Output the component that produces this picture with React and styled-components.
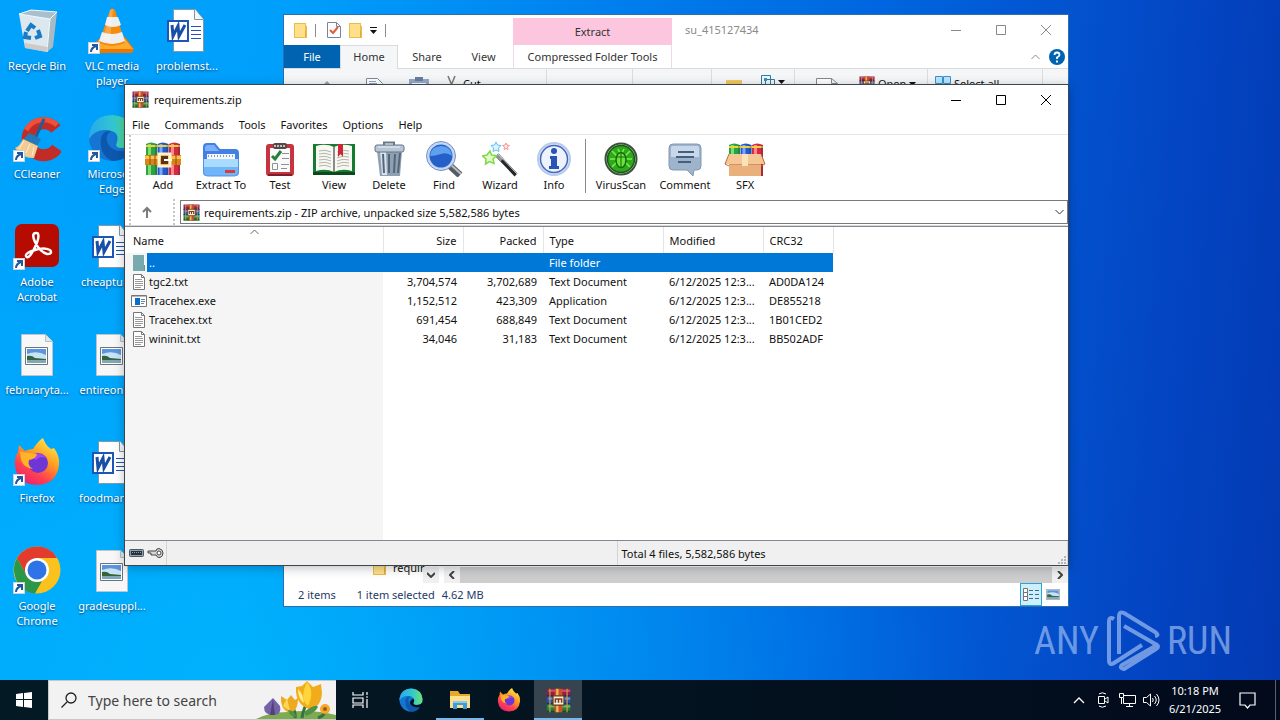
import React from "react";
import styled, { createGlobalStyle, css } from "styled-components";

const Global = createGlobalStyle`
  * { box-sizing: border-box; }
  body { margin: 0; font-family: "Noto Sans", "Open Sans", sans-serif; font-size: 11px; color: #111; }
  button, input, select { font: inherit; color: inherit; border: 0; background: none; padding: 0; margin: 0; }
  svg { display: block; flex: none; }
`;

const Screen = styled.div`
  min-height: 100vh;
  display: flex;
  flex-direction: column;
  overflow: hidden;
`;
const Desktop = styled.main`
  position: relative;
  flex: 1;
  background:
    radial-gradient(ellipse at 20% 100%, rgba(0, 196, 255, 0.5), rgba(0, 196, 255, 0) 50%),
    linear-gradient(95deg, #00a2fc 0%, #009ffb 22%, #0080ee 45%, #0065e0 66%, #0350cc 82%, #0344c2 90%, #033ab2 100%);
`;

/* Desktop shortcuts */
const IconGrid = styled.div`
  display: grid;
  grid-template-columns: repeat(3, 75px);
  grid-auto-rows: 108px;
`;
const Shortcut = styled.button`
  display: flex;
  flex-direction: column;
  align-items: center;
  padding: 6px 1px 0 0;
  color: #fff;
  line-height: 15px;
  text-shadow: 0 1px 2px rgba(0, 30, 80, 0.8);
  grid-column: ${(p) => p.$col};
  grid-row: ${(p) => p.$row};
`;
const ShortcutArt = styled.span`
  position: relative;
  display: block;
  width: 48px;
  height: 48px;
  margin-bottom: 4px;
`;
const ArrowBadge = styled.span`
  position: absolute;
  left: 0;
  bottom: 0;
  width: 12px;
  height: 12px;
  background: #fff;
  border: 1px solid #c9d3dc;
`;

/* Windows */
const Frame = styled.section`
  position: absolute;
  display: flex;
  flex-direction: column;
  overflow: hidden;
  background: #fff;
`;
const ExplorerFrame = styled(Frame)`
  inset: 14px 211px 73px 283px;
  border: 1px solid #2d6fa8;
`;
const ArchiveFrame = styled(Frame)`
  inset: 84px 211px 114px 124px;
  border: 1px solid #3c4650;
  box-shadow: 0 2px 10px rgba(0, 0, 0, 0.25);
`;
const Controls = styled.div`
  display: flex;
  margin-left: auto;
  color: ${(p) => (p.$dim ? "#888" : "#000")};
`;
const Control = styled.button`
  width: 45px;
  height: 29px;
  display: grid;
  place-items: center;
`;

/* Explorer */
const TitleRow = styled.header`
  display: flex;
  height: 30px;
`;
const QuickBar = styled.div`
  width: 229px;
  display: flex;
  align-items: center;
  padding-left: 10px;
`;
const QuickGap = styled.span`
  width: ${(p) => p.$w}px;
`;
const VLine = styled.span`
  width: 1px;
  height: 13px;
  background: #8c8c8c;
`;
const ExtractTab = styled.div`
  width: 159px;
  margin-top: 3px;
  background: #fcc6df;
  display: grid;
  place-items: center;
  color: #333;
`;
const WindowTitle = styled.span`
  padding-left: 13px;
  line-height: 30px;
  color: #8a8a8a;
`;
const TabRow = styled.nav`
  display: flex;
  height: 24px;
  border-bottom: 1px solid #dadbdc;
  color: #333;
`;
const Tab = styled.button`
  width: ${(p) => p.$w}px;
  ${(p) => p.$kind === "file" && css`background: #0063b1; color: #fff;`}
  ${(p) => p.$kind === "active" && css`background: #f5f6f7; border: 1px solid #dadbdc; border-bottom: 0; height: 24px; padding-bottom: 2px;`}
  ${(p) => p.$kind === "context" && css`border: solid #ecdbe4; border-width: 0 1px; margin-left: 2px;`}
`;
const HelpArea = styled.div`
  margin-left: auto;
  display: flex;
  align-items: center;
  gap: 9px;
  padding-right: 3px;
`;
const Ribbon = styled.div`
  display: flex;
  height: 92px;
  background: #f5f6f7;
  border-bottom: 1px solid #dadbdc;
`;
const RibbonGroup = styled.div`
  width: ${(p) => p.$w}px;
  padding: 6px 0 0 ${(p) => p.$pad}px;
  display: flex;
  align-items: flex-start;
  gap: ${(p) => p.$gap || 0}px;
  border-right: 1px solid #dcdddd;
  line-height: 18px;
  white-space: nowrap;
`;
const RibbonLabel = styled.button`
  display: flex;
  align-items: center;
  gap: 3px;
  line-height: 18px;
`;
const ExplorerBody = styled.div`
  flex: 1;
`;
const ExplorerFoot = styled.div`
  display: flex;
  height: 24px;
  align-items: flex-end;
`;
const TreeItem = styled.div`
  width: 139px;
  padding-left: 89px;
  display: flex;
  align-self: stretch;
  gap: 6px;
  line-height: 18px;
`;
const ScrollButton = styled.button`
  width: 16px;
  height: 16px;
  background: #f0f0f0;
  display: grid;
  place-items: center;
  margin-left: ${(p) => p.$gap || 0}px;
`;
const ScrollThumb = styled.span`
  flex: 1;
  height: 16px;
  background: #cdcdcd;
`;
const ExplorerStatus = styled.footer`
  display: flex;
  align-items: center;
  height: 23px;
  padding-left: 14px;
  color: #1e3a66;
  gap: 21px;
`;
const Selection = styled.span`
  display: flex;
  gap: 7px;
`;
const ViewButtons = styled.div`
  margin-left: auto;
  display: flex;
  padding-right: 4px;
`;
const ViewButton = styled.button`
  width: 22px;
  height: 23px;
  display: grid;
  place-items: center;
  ${(p) => p.$on && css`background: #cdeefb; border: 1px solid #2aa3d8;`}
`;

/* Archive manager */
const ArchiveTitle = styled.header`
  display: flex;
  align-items: center;
  height: 29px;
  padding-left: 7px;
  gap: 5px;
`;
const Menu = styled.nav`
  display: flex;
  gap: 1px;
  height: 21px;
  border-bottom: 1px solid #e6e6e6;
`;
const MenuItem = styled.button`
  padding: 0 7px;
`;
const Tools = styled.div`
  display: flex;
  height: 64px;
  padding-left: 4px;
`;
const Grip = styled.span`
  width: 2px;
  margin-right: ${(p) => p.$after}px;
  background: repeating-linear-gradient(#c4c4c4 0 2px, transparent 2px 4px);
`;
const Tool = styled.button`
  width: ${(p) => p.$w}px;
  display: flex;
  flex-direction: column;
  align-items: center;
  padding-top: 6px;
  line-height: 16px;
  white-space: nowrap;
`;
const ToolRule = styled.span`
  width: 1px;
  margin: 4px 2px 6px 6px;
  background: #8a8a8a;
`;
const AddressRow = styled.div`
  display: flex;
  height: 27px;
  padding-left: 4px;
  border-bottom: 1px solid #d8d8d8;
`;
const UpButton = styled.button`
  width: 30px;
  display: grid;
  place-items: center;
  margin-right: 11px;
`;
const AddressBox = styled.label`
  flex: 1;
  display: flex;
  align-items: center;
  height: 24px;
  margin-top: 1px;
  border: 1px solid #7a7a7a;
  padding: 0 3px 0 2px;
  gap: 4px;
`;
const AddressSelect = styled.select`
  flex: 1;
  appearance: none;
  outline: 0;
`;
const ListArea = styled.div`
  flex: 1;
  border-top: 1px solid #828790;
  border-bottom: 1px solid #828790;
  background: linear-gradient(90deg, #f5f5f5 258px, #fff 258px);
`;
const FileTable = styled.table`
  width: 708px;
  table-layout: fixed;
  border-collapse: collapse;
`;
const HeadCell = styled.th`
  position: relative;
  height: 26px;
  width: ${(p) => p.$w}px;
  padding: 0 6px 0 ${(p) => p.$pad || 6}px;
  font-weight: 400;
  text-align: ${(p) => p.$align || "left"};
  background: #fff;
  border-right: 1px solid #e5e5e5;
`;
const SortMark = styled.span`
  position: absolute;
  top: 2px;
  left: 125px;
`;
const Row = styled.tr`
  height: 19px;
  ${(p) => p.$on && css`color: #fff;`}
`;
const Cell = styled.td`
  padding: 0 6px;
  line-height: 19px;
  white-space: nowrap;
  overflow: hidden;
  text-align: ${(p) => p.$align || "left"};
  ${(p) => p.$on && css`background: #0078d7;`}
`;
const NameCell = styled(Cell)`
  padding: 0;
  background: none;
`;
const NameFlex = styled.div`
  display: flex;
  align-items: center;
`;
const FileArt = styled.span`
  width: 22px;
  padding-left: 6px;
`;
const FileLabel = styled.span`
  flex: 1;
  padding-left: 2px;
  height: 19px;
  ${(p) => p.$on && css`background: #0078d7;`}
`;
const ArchiveStatus = styled.footer`
  display: flex;
  height: 24px;
  background: #f0f0f0;
`;
const StatusPart = styled.div`
  display: flex;
  align-items: center;
  gap: 3px;
  padding-left: 4px;
  border-right: 1px solid #d4d4d4;
  flex: ${(p) => p.$flex};
`;
const SizeGrip = styled.span`
  margin-left: auto;
  align-self: flex-end;
`;

/* Watermark */
const Watermark = styled.div`
  position: absolute;
  right: 48px;
  bottom: 8px;
  display: flex;
  align-items: center;
  gap: 7px;
  color: rgba(170, 198, 245, 0.65);
  font: 38px/62px "Liberation Sans Narrow", "Roboto Condensed", "DejaVu Sans Condensed", sans-serif;
`;

/* Taskbar */
const Taskbar = styled.footer`
  display: flex;
  height: 40px;
  background: linear-gradient(90deg, #031a24, #03131f 50%, #020a1c);
  color: #fff;
`;
const TaskButton = styled.button`
  width: 48px;
  margin-right: ${(p) => p.$gap ?? 1}px;
  display: grid;
  place-items: center;
  border-bottom: 2px solid ${(p) => (p.$open ? "#76b9ed" : "transparent")};
  border-top: 2px solid transparent;
  background: ${(p) => (p.$on ? "#35444f" : "none")};
`;
const SearchBox = styled.label`
  display: flex;
  align-items: center;
  width: 288px;
  padding-left: 12px;
  gap: 11px;
  background: #f2f2f2;
  border: 1px solid #c8c8c8;
  border-right: 0;
  color: #333;
`;
const SearchInput = styled.input`
  flex: 1;
  min-width: 0;
  font-size: 14px;
  outline: 0;
  &::placeholder { color: #444; opacity: 1; }
`;
const Tray = styled.div`
  margin-left: auto;
  display: flex;
  align-items: center;
`;
const TrayButton = styled.button`
  width: 24px;
  height: 40px;
  display: grid;
  place-items: center;
`;
const Clock = styled.time`
  width: 64px;
  text-align: center;
  line-height: 18px;
`;
const ActionButton = styled(TrayButton)`
  width: 40px;
  margin-right: 8px;
`;
const ShowDesktop = styled.button`
  width: 5px;
  height: 40px;
  border-left: 1px solid #59636e;
`;

const Svg = ({ w = 16, h = w, box, children, ...rest }) => (
  <svg width={w} height={h} viewBox={box || `0 0 ${w} ${h}`} fill="none" aria-hidden="true" {...rest}>{children}</svg>
);

/* Icons */
const Books = ({ size = 17 }) => (
  <Svg w={size} box="0 0 32 32">
    <path fill="#8e1f45" d="M1 1h30v10H1z" /><path fill="#cf4a6c" d="M3 2h28v3H3z" /><path fill="#5a1733" d="M1 9h30v2H1z" />
    <path fill="#274fa8" d="M1 11h30v10H1z" /><path fill="#5f8ee0" d="M3 12h28v3H3z" /><path fill="#182f6d" d="M1 19h30v2H1z" />
    <path fill="#2a7a3c" d="M1 21h30v10H1z" /><path fill="#6bb560" d="M3 22h28v3H3z" /><path fill="#174a24" d="M1 29h30v2H1z" />
    <path fill="#c9a04a" d="M4 1h2v30H4zM26 1h2v30h-2z" opacity=".75" />
    <path fill="#c8502a" d="M11 1h10v30H11z" /><path fill="#f0b659" d="M13 1h3v30h-3z" />
    <path fill="#f7efe0" stroke="#6d3510" strokeWidth="1.5" d="M9 10h14v12H9z" />
    <path stroke="#7a3f13" strokeWidth="2" d="M12 19v-5h8v5M16 14v5" />
  </Svg>
);
const Upright = ({ y = 0 }) => (
  <g>
    {[["#2ba344", "#7ae06c", 1], ["#2558cc", "#78a8ff", 12.5], ["#d42a42", "#ff8591", 24]].map(([c, l, x]) => (
      <g key={x} transform={`translate(${x} ${y})`}>
        <path fill={c} d="M0 3q5-3 11 0v31H0z" /><path fill={l} d="M2 3h3v31H2z" />
        <path stroke="#f0d13a" strokeWidth="2" d="M0 5h11" /><path fill="#222" opacity=".25" d="M9 3h2v31H9z" />
      </g>
    ))}
  </g>
);
const toolArt = {
  Add: (
    <Svg w={36}><Upright />
      <path fill="#d9851b" d="M0 14h36v10H0z" /><path fill="#ffc24e" d="M0 15h36v3H0z" />
      <path stroke="#8f4e08" d="M5 14v10M10 14v10M31 14v10" />
      <path stroke="#fff2c8" strokeWidth="3" d="M14 13h11v12H14z" /><path fill="#603310" d="M16 15h7v8h-7z" /><path fill="#fff" d="M19 18h8v2h-8z" />
    </Svg>
  ),
  "Extract To": (
    <Svg w={38} h={36}>
      <path fill="#4380e6" d="M1 6q0-4 4-4h8l5 6h15q4 0 4 4v18H1z" /><path fill="#7db0fa" d="M3 7q0-3 3-3h6l5 6H3z" />
      <path fill="#f3f6fa" d="M5 13h28v10H5z" /><path stroke="#8f9ba8" strokeWidth="2" strokeDasharray="1 2" d="M6 15h27" />
      <path fill="#a9dbff" d="M1 18h36v13q0 4-4 4H5q-4 0-4-4z" /><path fill="#6fb5fa" d="M1 26h36v5q0 4-4 4H5q-4 0-4-4z" />
      <path fill="#dc3b32" d="M23 29h10v3H23z" /><path stroke="#5493e6" d="M1.500 18v13q0 4 4 4h27q4 0 4-4V18" />
    </Svg>
  ),
  Test: (
    <Svg w={32} h={36}>
      <rect x="2" y="3" width="28" height="32" rx="3" fill="#c7343f" /><path fill="#7d1d28" d="M4 33h24v2H4z" />
      <path fill="#fafafa" d="M6 7h20v24H6z" /><rect x="9" y="2" width="14" height="6" rx="2" fill="#554848" />
      <path stroke="#e6e6e6" strokeWidth="1.5" strokeDasharray="2 1" d="M10 5h12" />
      <path stroke="#27813b" strokeWidth="3" d="m8 15 3 3 6-8" /><path stroke="#8b929a" d="M18 12.500h7M18 17.500h7M17 23.500h8M17 27.500h6M8.500 22.500h5v6h-5z" />
    </Svg>
  ),
  View: (
    <Svg w={42} h={36}>
      <path fill="#167a31" d="M0 3h42v31H0z" /><path fill="#0a4a1c" d="M0 31h42v3H0z" />
      <path fill="#f8f8f3" d="M3 5q10-3 18 1 8-4 18-1v25q-10-3-18 1-8-4-18-1z" />
      <path stroke="#666" strokeWidth="1.5" d="M21 5v26" />
      {[10, 13, 16, 19, 22, 25].map((y) => <path key={y} stroke="#b4b4ac" d={`M6 ${y}q6-2 12 1M24 ${y + 1}q6-3 12-1`} />)}
      <path fill="#ce2835" d="M25 3h5v13l-2.500-3-2.500 3z" />
    </Svg>
  ),
  Delete: (
    <Svg w={34} h={36}>
      <path stroke="#6b7885" strokeWidth="2" d="M12 4V1.500h10V4" />
      <path fill="#8da0b4" d="M5 10h25l-2 25H8z" /><path fill="#d8e2ec" d="M8 10h6l1 24H10z" />
      <path stroke="#566677" strokeWidth="2" d="m11 13 1 19M17 13v19M23 13l-1 19M28 12l-2 20" />
      <rect x="3" y="4" width="29" height="7" rx="2" fill="#b7c5d4" stroke="#647486" /><path stroke="#e9f1f8" d="M6 6h22" />
    </Svg>
  ),
  Find: (
    <Svg w={38} h={36}>
      <path stroke="#555b63" strokeWidth="7" d="m24 24 11 10" /><path stroke="#b8bfc7" strokeWidth="2" d="m25 23 11 10" />
      <circle cx="16" cy="15" r="13" fill="#2560c9" stroke="#c4d6f6" strokeWidth="3" /><circle cx="16" cy="15" r="14.500" stroke="#7692c3" />
      <path fill="#5ea1ee" d="M5 15q1-10 11-10t11 10q-5-4-11-2t-11 2z" />
    </Svg>
  ),
  Wizard: (
    <Svg w={36}>
      <path stroke="#24282b" strokeWidth="4" d="m15 14 19 20" /><path stroke="#909499" strokeWidth="4" d="m15 14 5 5" /><path stroke="#ccc" d="m16 13 19 20" />
      <path fill="#e2fac8" stroke="#7fd94a" strokeWidth="1.500" d="m8 10 1.500 4 5 .5-3.500 3.500 1 4.500-4.500-2-4 2.500.500-5-3.500-3 4.500-1z" />
      <path fill="#dcf4ff" stroke="#5fc1f0" d="m14 1 1.500 3 3.500.500-2.500 2.500.500 3.500-3-1.500-3 1.500.500-3.500L9 4.500l3.500-.500z" />
      <path fill="#ffe2e2" stroke="#f09a9a" d="m24 2 1 2 2.500.500-2 1.500.500 2.500-2-1-2 1 .500-2.500-2-1.500 2.500-.500z" />
    </Svg>
  ),
  Info: (
    <Svg w={36}>
      <circle cx="18" cy="18" r="16" fill="#dbe5f8" stroke="#b9cbea" strokeWidth="2" /><circle cx="18" cy="18" r="13.5" fill="#edf2fd" stroke="#4068bd" strokeWidth="1.500" />
      <circle cx="18" cy="10" r="3" fill="#2754b5" /><path fill="#2754b5" d="M14 15h7v10h2v3H13v-3h2v-7h-1z" />
    </Svg>
  ),
  VirusScan: (
    <Svg w={36}>
      <circle cx="18" cy="18" r="15.500" fill="#eef4ee" stroke="#3c503c" strokeWidth="2" /><circle cx="18" cy="18" r="13.500" fill="#2fa81c" stroke="#145c14" strokeWidth="1.500" />
      <path stroke="#7cf04a" strokeWidth="1.500" d="m9 10 5 5M27 10l-5 5M7 18h6M23 18h6M9 26l5-5M27 26l-5-5M15 8l2 4M21 8l-2 4" />
      <ellipse cx="18" cy="19" rx="5" ry="7.500" fill="#6fe038" stroke="#0e6b10" strokeWidth="1.500" /><path stroke="#0e6b10" d="M18 12v14M13 16h10" />
    </Svg>
  ),
  Comment: (
    <Svg w={36}>
      <path fill="#9eb4cc" stroke="#8298b2" d="M6 3h24q4 0 4 4v18q0 4-4 4h-3l-1 6-6-6H6q-4 0-4-4V7q0-4 4-4z" />
      <path fill="#c9d8e8" d="M6 5h24q2 0 2 2v9H4V7q0-2 2-2z" /><path stroke="#455f7e" strokeWidth="2" d="M11 11h16M9 16h18M11 21h13" />
    </Svg>
  ),
  SFX: (
    <Svg w={42} h={36}>
      <g transform="translate(4)"><Upright y={1} /></g>
      <path fill="#d98f5c" d="M5 13h32v22H5z" /><path fill="#f5c795" d="M5 13h32l4 10H1z" />
      <path fill="#eab07c" d="M5 24h32v11H5z" /><path stroke="#b56d40" d="m5 13-4 10 4 2M37 13l4 10-4 2" /><path fill="#fbe2b8" d="M18 13h6v12h-6z" />
    </Svg>
  ),
};
const Folder = () => (
  <Svg w={14} h={17}><path fill="#e8bd4d" d="M0 1h12v3h1v12H0z" /><path fill="#ffe08a" d="M1 2h10v13H1z" /><path stroke="#dcab3b" d="M11.500 9v6" /></Svg>
);
const TextFile = () => (
  <Svg w={16}><path fill="#fff" stroke="#777" d="M2.500.5h8l3 3v12h-11z" /><path stroke="#777" d="M10.500.5v3h3" /><path stroke="#999" d="M4 5.500h7M4 7.500h8M4 9.500h8M4 11.500h8M4 13.500h6" /></Svg>
);
const ExeFile = () => (
  <Svg w={16}><path fill="#fff" stroke="#777" d="M.5 2.500h15v11H.5z" /><path stroke="#b8b8b8" d="M1 3.500h14" /><path fill="#0a6cc8" d="M4 5h5v7H4z" /><path stroke="#6787a3" d="M10 6.500h4M10 8.500h4M10 10.500h3" /></Svg>
);
const UpFolder = () => (
  <Svg w={16}><path fill="#78a9ad" d="M2 0h11v10h1v6H2z" /><path stroke="#619298" d="M13.500 10v6" /></Svg>
);
const Scenery = ({ x = 0, y = 0 }) => (
  <g transform={`translate(${x} ${y})`}>
    <path fill="#fff" stroke="#68747e" d="M.5.5h22v17H.5z" /><path fill="#5b95dd" d="M2 2h19v14H2z" /><path fill="#c7e3f5" d="M2 7q10-4 19 1v4H2z" />
    <path fill="#35633a" d="M2 9q5-1 8 2l11 1v1H2z" /><path fill="#7fa9b8" d="M2 13h19v3H2z" />
  </g>
);
const Firefox = ({ size }) => (
  <Svg w={size} box="0 0 48 48">
    <defs><linearGradient id="foxBody" x1=".8" y1="0" x2=".2" y2="1"><stop stopColor="#fff04b" /><stop offset=".4" stopColor="#ff9a22" /><stop offset=".7" stopColor="#ff4150" /><stop offset="1" stopColor="#e81c75" /></linearGradient></defs>
    <path fill="url(#foxBody)" d="M30 0q3 8 8 11l3-1q6 8 5 17-2 19-22 20Q4 46 2 28 1 20 5 14l1-7 6 6q4-2 8-2 5-8 10-11z" />
    <circle cx="25" cy="25" r="10" fill="#6e36d4" /><path fill="#a547ef" d="M17 18q8-6 17 2-7-3-11 2z" />
    <path fill="#ffb327" d="M7 13q5 2 10 2l7 1q-1 5-8 6-2 6 4 9-9-1-12-9z" />
  </Svg>
);
const Edge = ({ size }) => (
  <Svg w={size} box="0 0 48 48">
    <defs><linearGradient id="edgeTop"><stop stopColor="#27a8ea" /><stop offset=".55" stopColor="#32c8cf" /><stop offset="1" stopColor="#6de46f" /></linearGradient></defs>
    <circle cx="24" cy="24" r="23" fill="#1476d2" />
    <path fill="url(#edgeTop)" d="M1 21Q4 1 25 1q21 2 22 22 0 11-13 11-8 0-5-6 3-11-10-12Q7 15 1 25z" />
    <path fill="#0d58ae" d="M13 24q2-8 10-7-7 5-3 13 5 8 15 7 7-1 8-2-4 12-19 12-13-6-11-23z" />
    {size < 30 && <path fill="#03131f" d="M29 21q3 5 0 8-1 5 6 5 8 0 11-4l1 6-6 3q-16 0-19-8-1-6 7-10z" />}
  </Svg>
);
const desktopArt = {
  bin: (
    <Svg w={48}>
      <path fill="#a9bfcc" d="m6 8 12-4 26 2-7 7z" /><path fill="#dce8ee" d="m6 8 31 5-3 33-22-4z" /><path fill="#a8bac4" d="m37 13 7-7-4 35-6 5z" />
      <path stroke="#f3fbff" d="m6 8 31 5 7-7-26-2zM37 13l-3 33" /><path fill="#c5b5ae" opacity=".6" d="m12 37 23 4-1 5-22-4z" />
      <path stroke="#187cc4" strokeWidth="4" d="m14 25 4-6 4 3m3 2 2 6-5 2m-4 0-6-1 1-5" />
    </Svg>
  ),
  vlc: (
    <Svg w={48}>
      <path fill="#ef7600" d="m8 36 5-5h24l9 12-2 4H7L5 43z" /><path fill="#ffab2e" d="m11 34 26-1 8 10H6z" />
      <path fill="#f68a0b" d="M22 4q2-3 5 0l10 33q-13 6-26 0z" /><path fill="#eee" d="m19 11 11 0 3 8q-8 4-16 0zM14 26q10 4 20 0l3 9q-13 6-26 0z" />
      <path fill="#fff" opacity=".25" d="m22 4 3-1-3 33-7-2z" />
    </Svg>
  ),
  word: (
    <Svg w={48}>
      <path fill="#fff" stroke="#8099ad" d="M10.500 3.500h22l8 10v32h-30z" /><path fill="#f3f6f9" stroke="#8294a5" d="M31.500 3.500v10h9" />
      <path stroke="#2456af" d="M28 20.500h10M28 24.500h10M28 28.500h10M28 32.500h10" strokeWidth="1.200" />
      <path fill="#fff" stroke="#1e56b5" strokeWidth="2" d="M5 15h20v20H5z" /><path stroke="#174ea6" strokeWidth="3" d="m9 19 1 11 5-10 1 10 6-11" />
    </Svg>
  ),
  image: (
    <Svg w={48}><path fill="#f7f7f7" stroke="#bcc6cc" d="M8.500 4.500h24l7 7v34h-31z" /><path fill="#e4e4e4" stroke="#b5bfc6" d="M32.500 4.500v7h7" /><Scenery x={12} y={17} /></Svg>
  ),
  ccleaner: (
    <Svg w={48}>
      <path stroke="#c22c26" strokeWidth="12" d="M43 15A16 16 0 1 0 44 34" /><path stroke="#ef503b" strokeWidth="5" d="M44 11A20 20 0 0 0 13 16" />
      <path stroke="#1d5d98" strokeWidth="3" d="m31 5-9 20" /><path fill="#2479b9" d="m16 19 12 6-4 7-14-6z" />
      <path fill="#f2ca93" d="m10 25 15 7-4 12q-10 1-19-10 5-2 8-9z" /><path stroke="#fff0cc" d="m11 27-5 8M17 30l-4 9M21 33l-2 9" />
    </Svg>
  ),
  edge: <Edge size={48} />,
  acrobat: (
    <Svg w={48}><rect x="2" y="2" width="44" height="43" rx="7" fill="#b50b00" /><path stroke="#fff" strokeWidth="2.500" strokeLinejoin="round" d="M23 11q-5 0-1 9 5 10 12 12 6 0 3-4-6-3-15 0-10 3-9 6 2 4 7-5 7-13 5-17 0-1-2-1z" /></Svg>
  ),
  firefox: <Firefox size={48} />,
  chrome: (
    <Svg w={48}>
      <circle cx="24" cy="24" r="23.500" fill="#fbc11c" /><path fill="#e33b2e" d="M4 12Q11 .5 24 .5q14 0 20 11.500H24L14 30z" />
      <path fill="#2c9747" d="m4 12 10 18q5 7 15 5l-7 12.500Q6 46 2 30-1 20 4 12z" /><circle cx="24" cy="24" r="12" fill="#fff" /><circle cx="24" cy="24" r="9.500" fill="#2e74e8" />
    </Svg>
  ),
};

const shortcuts = [
  ["bin", ["Recycle Bin"], 1, 1, false], ["vlc", ["VLC media", "player"], 2, 1, true], ["word", ["problemst..."], 3, 1, false],
  ["ccleaner", ["CCleaner"], 1, 2, true], ["edge", ["Microsoft", "Edge"], 2, 2, true],
  ["acrobat", ["Adobe", "Acrobat"], 1, 3, true], ["word", ["cheapturn..."], 2, 3, false],
  ["image", ["februaryta..."], 1, 4, false], ["image", ["entireonlin..."], 2, 4, false],
  ["firefox", ["Firefox"], 1, 5, true], ["word", ["foodmarke..."], 2, 5, false],
  ["chrome", ["Google", "Chrome"], 1, 6, true], ["image", ["gradesuppl..."], 2, 6, false],
];
const tools = [["Add", 52], ["Extract To", 64], ["Test", 54], ["View", 54], ["Delete", 56], ["Find", 54], ["Wizard", 58], ["Info", 50]];
const extraTools = [["VirusScan", 66], ["Comment", 62], ["SFX", 58]];
const files = [
  { art: <UpFolder />, name: "..", size: "", packed: "", type: "File folder", date: "", crc: "", on: true },
  { art: <TextFile />, name: "tgc2.txt", size: "3,704,574", packed: "3,702,689", type: "Text Document", date: "6/12/2025 12:3...", crc: "AD0DA124" },
  { art: <ExeFile />, name: "Tracehex.exe", size: "1,152,512", packed: "423,309", type: "Application", date: "6/12/2025 12:3...", crc: "DE855218" },
  { art: <TextFile />, name: "Tracehex.txt", size: "691,454", packed: "688,849", type: "Text Document", date: "6/12/2025 12:3...", crc: "1B01CED2" },
  { art: <TextFile />, name: "wininit.txt", size: "34,046", packed: "31,183", type: "Text Document", date: "6/12/2025 12:3...", crc: "BB502ADF" },
];

const WindowControls = ({ dim }) => (
  <Controls $dim={dim}>
    <Control aria-label="Minimize"><Svg w={10}><path stroke="currentColor" d="M0 5.500h10" /></Svg></Control>
    <Control aria-label="Maximize"><Svg w={10}><path stroke="currentColor" d="M.5.5h9v9h-9z" /></Svg></Control>
    <Control aria-label="Close"><Svg w={10}><path stroke="currentColor" d="m0 0 10 10M10 0 0 10" /></Svg></Control>
  </Controls>
);
const Caret = () => <Svg w={7} h={4}><path fill="#111" d="M0 0h7L3.500 4z" /></Svg>;
const ToolButton = ({ name, width }) => <Tool $w={width}>{toolArt[name]}{name}</Tool>;

const Explorer = () => (
  <ExplorerFrame aria-label="su_415127434">
    <TitleRow>
      <QuickBar>
        <Folder /><QuickGap $w={7} /><VLine /><QuickGap $w={11} />
        <Svg w={14} h={16}><path fill="#fff" stroke="#75879a" d="M.5.5h9l4 4v11H.5z" /><path stroke="#75879a" d="M9.500.5v4h4" /><path stroke="#e45c3a" strokeWidth="2" d="m3 8 3 3 5-6" /></Svg>
        <QuickGap $w={8} /><Folder /><QuickGap $w={7} />
        <Svg w={7} h={8}><path stroke="#111" d="M0 1.500h7" /><path fill="#111" d="M0 4h7L3.500 8z" /></Svg>
        <QuickGap $w={8} /><VLine />
      </QuickBar>
      <ExtractTab>Extract</ExtractTab>
      <WindowTitle>su_415127434</WindowTitle>
      <WindowControls dim />
    </TitleRow>
    <TabRow>
      <Tab $w={56} $kind="file">File</Tab><Tab $w={58} $kind="active">Home</Tab><Tab $w={58}>Share</Tab><Tab $w={55}>View</Tab>
      <Tab $w={159} $kind="context">Compressed Folder Tools</Tab>
      <HelpArea>
        <Svg w={9} h={6}><path stroke="#888" d="m.5 5 4-4 4 4" /></Svg>
        <Svg w={16}><circle cx="8" cy="8" r="8" fill="#0063b1" /><path stroke="#fff" strokeWidth="1.800" d="M5.500 6q0-2.500 2.500-2.500T10.500 6Q10.500 7 8 8.500V10M8 11.500v2" /></Svg>
      </HelpArea>
    </TabRow>
    <Ribbon>
      <RibbonGroup $w={263} $pad={38}>
        <Svg w={10} h={16}><path fill="#9aa4ad" d="m0 11 5-5 5 5z" /></Svg><QuickGap $w={34} />
        <Svg w={17} h={20}><path fill="#fff" stroke="#7d8997" d="M.5 3.500h11l5 5v12H.5z" /><path stroke="#91a7be" d="M3 6.500h7M3 8.500h8" /></Svg><QuickGap $w={26} />
        <Svg w={20}><path fill="#92a9c8" d="M0 4h20v16H0z" /><path fill="#fff" d="M3 8h14v8H3z" /><path fill="#667e9c" d="M6 2h8v4H6z" /></Svg><QuickGap $w={18} />
        <Svg w={9} h={16}><path stroke="#777" strokeWidth="1.500" d="m1 1 5 12M8 1 3 13" /></Svg><QuickGap $w={7} />
        <RibbonLabel>Cut</RibbonLabel>
      </RibbonGroup>
      <RibbonGroup $w={86} $pad={0} /><RibbonGroup $w={79} $pad={0} />
      <RibbonGroup $w={83} $pad={14} $gap={19}>
        <Svg w={16}><path fill="#f1c760" d="M0 5h16v11H0z" /></Svg>
        <RibbonLabel><Svg w={14}><path fill="#e9f7ff" stroke="#347a9c" d="M.5.5h9v9h-9zM4.500 4.500h9v9h-9z" /><path fill="#3a91ba" d="M3 3h3v3H3z" /></Svg><Caret /></RibbonLabel>
      </RibbonGroup>
      <RibbonGroup $w={133} $pad={21} $gap={21}>
        <Svg w={22} h={20}><path fill="#fff" stroke="#888" d="M.5 3.500h15l6 5v12H.5zM15.500 3.500v5h6" /></Svg>
        <RibbonLabel><Books size={16} />Open <Caret /></RibbonLabel>
      </RibbonGroup>
      <RibbonGroup $w={115} $pad={7}>
        <RibbonLabel><Svg w={16}><path fill="#b7e5ff" stroke="#3d91cf" d="M.5.5h7v7h-7zM8.500.5h7v7h-7zM.5 8.500h7v7h-7zM8.500 8.500h7v7h-7z" /></Svg>Select all</RibbonLabel>
      </RibbonGroup>
    </Ribbon>
    <ExplorerBody />
    <ExplorerFoot>
      <TreeItem><Folder />requir</TreeItem>
      <ScrollButton aria-label="Scroll down"><Svg w={8} h={6}><path stroke="#444" strokeWidth="2" d="m0 1 4 4 4-4" /></Svg></ScrollButton>
      <ScrollButton $gap={5} aria-label="Scroll left"><Svg w={6} h={8}><path stroke="#444" strokeWidth="2" d="M5 0 1 4l4 4" /></Svg></ScrollButton>
      <ScrollThumb />
      <ScrollButton aria-label="Scroll right"><Svg w={6} h={8}><path stroke="#444" strokeWidth="2" d="m1 0 4 4-4 4" /></Svg></ScrollButton>
    </ExplorerFoot>
    <ExplorerStatus>
      <span>2 items</span><Selection><span>1 item selected</span><span>4.62 MB</span></Selection>
      <ViewButtons>
        <ViewButton $on aria-label="Details"><Svg w={16} h={13}><path fill="#fff" stroke="#7e7172" d="M.5.5h4v4h-4zM.5 4.500h4v4h-4zM.5 8.500h4v4h-4z" /><path stroke="#376f8b" strokeDasharray="4 2" d="M6 2.500h10M6 6.500h10M6 10.500h10" /></Svg></ViewButton>
        <ViewButton aria-label="Large icons"><Svg w={14} h={11} box="0 0 23 18"><Scenery /></Svg></ViewButton>
      </ViewButtons>
    </ExplorerStatus>
  </ExplorerFrame>
);

const Archive = () => (
  <ArchiveFrame aria-label="requirements.zip">
    <ArchiveTitle><Books />requirements.zip<WindowControls /></ArchiveTitle>
    <Menu>{["File", "Commands", "Tools", "Favorites", "Options", "Help"].map((m) => <MenuItem key={m}>{m}</MenuItem>)}</Menu>
    <Tools>
      <Grip $after={6} />
      {tools.map(([n, w]) => <ToolButton key={n} name={n} width={w} />)}
      <ToolRule />
      {extraTools.map(([n, w]) => <ToolButton key={n} name={n} width={w} />)}
    </Tools>
    <AddressRow>
      <Grip $after={1} />
      <UpButton aria-label="Up one level"><Svg w={12}><path stroke="#7b7b7b" strokeWidth="2" d="M6 12V2M2 6l4-4 4 4" /></Svg></UpButton>
      <Grip $after={5} />
      <AddressBox>
        <Books />
        <AddressSelect aria-label="Archive path"><option>requirements.zip - ZIP archive, unpacked size 5,582,586 bytes</option></AddressSelect>
        <Svg w={9} h={6}><path stroke="#333" d="m.5 1 4 4 4-4" /></Svg>
      </AddressBox>
    </AddressRow>
    <ListArea>
      <FileTable>
        <thead>
          <tr>
            <HeadCell $w={258} $pad={8}>Name<SortMark><Svg w={9} h={6}><path stroke="#666" d="m.5 5 4-4 4 4" /></Svg></SortMark></HeadCell>
            <HeadCell $w={80} $align="right">Size</HeadCell><HeadCell $w={80} $align="right">Packed</HeadCell>
            <HeadCell $w={120}>Type</HeadCell><HeadCell $w={100}>Modified</HeadCell><HeadCell $w={70}>CRC32</HeadCell>
          </tr>
        </thead>
        <tbody>
          {files.map((f) => (
            <Row key={f.name} $on={f.on}>
              <NameCell><NameFlex><FileArt>{f.art}</FileArt><FileLabel $on={f.on}>{f.name}</FileLabel></NameFlex></NameCell>
              <Cell $on={f.on} $align="right">{f.size}</Cell><Cell $on={f.on} $align="right">{f.packed}</Cell>
              <Cell $on={f.on}>{f.type}</Cell><Cell $on={f.on}>{f.date}</Cell><Cell $on={f.on}>{f.crc}</Cell>
            </Row>
          ))}
        </tbody>
      </FileTable>
    </ListArea>
    <ArchiveStatus>
      <StatusPart $flex="0 0 42px">
        <Svg w={15} h={8}><rect x=".5" y=".5" width="14" height="7" rx="1" fill="#91a2ad" stroke="#4a5963" /><path fill="#25333d" d="M2 2h11v4H2z" /><path stroke="#8da2ae" strokeDasharray="1 1" d="M3 3.500h9" /></Svg>
        <Svg w={17} h={10}><path fill="#d7d7d7" stroke="#444" d="M9 3H1v2h3v2h5q1 3 4 2.500 3-1 3-4.500T12 .5Q9 .5 9 3z" /><circle cx="12" cy="5" r="2" fill="#fff" stroke="#444" /></Svg>
      </StatusPart>
      <StatusPart $flex="1" />
      <StatusPart $flex="1">
        Total 4 files, 5,582,586 bytes
        <SizeGrip><Svg w={9}><path fill="#b5b5b5" d="M6 0h2v2H6zM3 3h2v2H3zM6 3h2v2H6zM0 6h2v2H0zM3 6h2v2H3zM6 6h2v2H6z" /></Svg></SizeGrip>
      </StatusPart>
    </ArchiveStatus>
  </ArchiveFrame>
);

const Flowers = () => (
  <Svg w={80} h={38} box="0 0 80 38">
    <path fill="#7eaa52" d="M0 38q14-7 32-7 24-3 48 3v4z" /><path stroke="#36723a" strokeWidth="3" d="M35 23q5 8 4 14M54 16q-7 12-8 21M69 28q1 6-7 9" />
    <path fill="#7562a7" d="m17 17 7 8q2 9-7 9t-9-8z" /><path fill="#51427f" d="m17 18 2 16h-5z" />
    <path fill="#edaa20" d="m25 15 6 4 4-5 4 5 3-2q0 14-9 15-9-4-8-17z" /><path fill="#ffd755" d="m31 17 3 13-7-5z" />
    <path fill="#f0ac1a" d="m40 6 6-1 5-5 6 6 8-3 1 9q-1 15-13 16-14-5-13-22z" /><path fill="#ffd43c" d="M51 1q8 10 1 24-9-7-1-24z" /><path fill="#ffeb7d" d="M42 8q5 4 6 14-6-4-6-14z" />
    <circle cx="69" cy="28" r="5" fill="#f7a72b" /><circle cx="69" cy="28" r="2" fill="#9a5a20" /><path fill="#4e9147" d="M48 31q12-9 14-5-3 6-12 9zM32 29q8 1 8 7-7-1-8-7z" />
  </Svg>
);

export default function App() {
  return (
    <Screen>
      <Global />
      <Desktop>
        <IconGrid>
          {shortcuts.map(([art, lines, col, row, link]) => (
            <Shortcut key={lines[0]} $col={col} $row={row}>
              <ShortcutArt>
                {desktopArt[art]}
                {link && <ArrowBadge><Svg w={10}><path stroke="#24579b" strokeWidth="2" d="M2 9q0-4 5-6M3 2h5v5" /></Svg></ArrowBadge>}
              </ShortcutArt>
              {lines.map((l) => <span key={l}>{l}</span>)}
            </Shortcut>
          ))}
        </IconGrid>
        <Explorer />
        <Archive />
        <Watermark>
          <span>ANY</span>
          <Svg w={54} h={62}>
            <path stroke="currentColor" strokeWidth="4" strokeLinejoin="round" d="M8 9q-5-3-5 3v38q0 6 5 3l28-18M13 44V6q0-5 5-3l31 19q5 3 0 4M18 16l33 19-35 20q-3 3 2 4l32-20q4-2 0-5" />
          </Svg>
          <span>RUN</span>
        </Watermark>
      </Desktop>
      <Taskbar>
        <TaskButton $gap={0} aria-label="Start"><Svg w={16}><path fill="#fff" d="m0 2 7-1v6H0zM8 1l8-1v7H8zM0 8h7v7l-7-1zM8 8h8v8l-8-1z" /></Svg></TaskButton>
        <SearchBox>
          <Svg w={16}><circle cx="10" cy="6" r="5" stroke="#222" strokeWidth="1.300" /><path stroke="#222" strokeWidth="1.300" d="m6 10-5.500 5.500" /></Svg>
          <SearchInput placeholder="Type here to search" aria-label="Search" />
          <Flowers />
        </SearchBox>
        <TaskButton $gap={3} aria-label="Task view"><Svg w={17} h={16}><path stroke="#fff" strokeWidth="1.200" d="M1 0v3h10V0M1 6h10v5H1zM1 16v-3h10v3M15 0v3M15 7v9M14 5h2" /></Svg></TaskButton>
        <TaskButton aria-label="Edge"><Edge size={24} /></TaskButton>
        <TaskButton $open aria-label="File Explorer">
          <Svg w={22} h={20}><path fill="#e7a72d" d="M1 1h8l2 3h10v14H1z" /><path fill="#ffe08a" d="M1 6h20v12H1z" /><path fill="#3c9bdd" d="M4 11h14v8h-4v-4H8v4H4z" /><path fill="#8cc9ef" d="M4 11h14v2H4z" /></Svg>
        </TaskButton>
        <TaskButton aria-label="Firefox"><Firefox size={24} /></TaskButton>
        <TaskButton $open $on aria-label="WinRAR"><Books size={25} /></TaskButton>
        <Tray>
          <TrayButton aria-label="Show hidden icons"><Svg w={12} h={8}><path stroke="#fff" strokeWidth="1.300" d="m1 7 5-5 5 5" /></Svg></TrayButton>
          <TrayButton aria-label="Camera"><Svg w={12} h={18}><path stroke="#fff" d="M1.500 5.500h6v7h-6zM8 8l3-2v6l-3-2M2 3q3-2.500 7 0M2 15q3 2.500 7 0" /></Svg></TrayButton>
          <TrayButton aria-label="Network"><Svg w={17} h={14}><path stroke="#fff" d="M4 2.500h12.500v8H4.500V5M.5.5h4v4h-4zM2.500 4v7M10.500 10.500v3M7 13.500h7" /></Svg></TrayButton>
          <TrayButton aria-label="Volume"><Svg w={17} h={14}><path stroke="#fff" d="M.5 4.500h3l4-3.500v12l-4-3.500h-3zM9.500 5q1.500 2 0 4M11.500 3q3.500 4 0 8M13.500 1q5 6 0 12" /></Svg></TrayButton>
          <Clock>10:18 PM<br />6/21/2025</Clock>
          <ActionButton aria-label="Notifications"><Svg w={17} h={17}><path stroke="#fff" strokeWidth="1.200" d="M1 1h15v12h-5l-2.500 3L6 13H1z" /></Svg></ActionButton>
          <ShowDesktop aria-label="Show desktop" />
        </Tray>
      </Taskbar>
    </Screen>
  );
}
